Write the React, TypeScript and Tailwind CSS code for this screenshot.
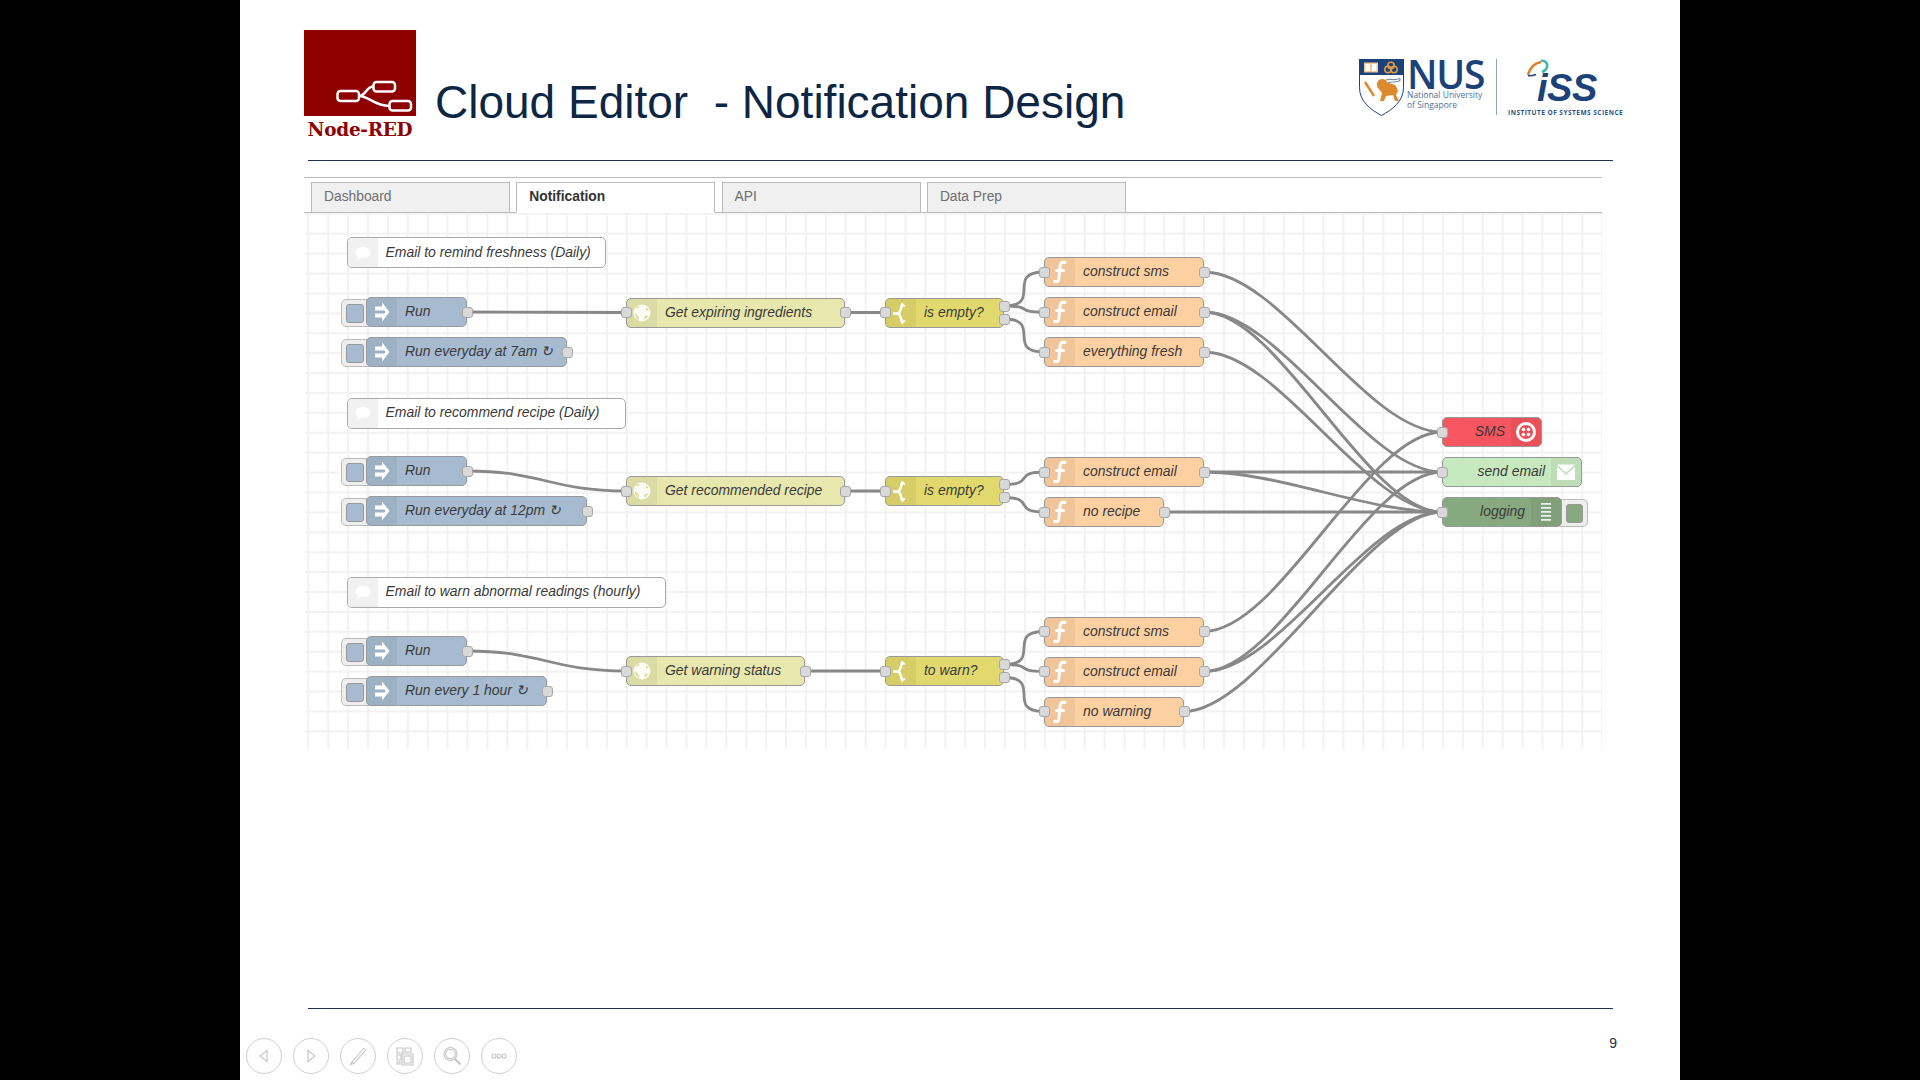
import React from 'react';

// canvas origin in page pixels, node data below is given in page pixels
const OX = 305;
const OY = 213;

type IconName = 'inject' | 'globe' | 'switch' | 'fn' | 'twilio' | 'email' | 'debug' | 'comment';

interface NodeData {
  x: number;
  y: number;
  w: number;
  label: string;
  color: string;
  icon: IconName;
  right?: boolean;
  input?: boolean;
  outputs?: number;
  button?: 'left' | 'right';
}

function NodeIcon({ icon }: { icon: IconName }) {
  switch (icon) {
    case 'inject':
      return (
        <svg viewBox="0 0 30 30" className="h-[30px] w-[30px]" fill="#fff">
          <path d="M8 9.500h7V5.500l7.500 9.500-7.500 9.500v-4H8v-4h9.500l1-1.500-1-1.500H8z" />
        </svg>
      );
    case 'globe':
      return (
        <svg viewBox="0 0 30 30" className="h-[30px] w-[30px]">
          <circle cx="15" cy="15" r="8.500" fill="#fff" fillOpacity="0.9" />
          <path d="M9 10c2 1 3 0 4-2l-3 .5zM7.500 15c2 .5 3 2 4 3.500l.5 4c-2-1-4-4-4.500-7.500zM17 19l3-2 1 1-3 4zM19 9l3 3-3 .5z" fill="#e0dfa2" />
        </svg>
      );
    case 'switch':
      return (
        <svg viewBox="0 0 30 30" className="h-[30px] w-[30px]" fill="none" stroke="#fff" strokeWidth="2.400">
          <path d="M7 15.500h4c3 0 3-2 4-5 .5-1.500 1-2.500 1-3.500M11 15.500c3 0 3 2 4 5 .5 1.500 1 2 1 3" />
          <path d="M16 4.500 20 8.500h-6zM16 26.500l4-4h-6z" fill="#fff" stroke="none" />
        </svg>
      );
    case 'fn':
      return (
        <svg viewBox="0 0 30 30" className="h-[30px] w-[30px]" fill="none" stroke="#fff" strokeWidth="3" strokeLinecap="round">
          <path d="M20 5.500c-3-1-4.500.5-4.800 3.500l-1.400 13c-.3 2.500-1.500 3-4 2.500M11.500 13.500h7" />
        </svg>
      );
    case 'twilio':
      return (
        <svg viewBox="0 0 30 30" className="h-[30px] w-[30px]" fill="none">
          <circle cx="15" cy="15" r="8.500" stroke="#fff" strokeWidth="3" />
          <g fill="#fff">
            <circle cx="12.500" cy="12.500" r="1.800" />
            <circle cx="17.500" cy="12.500" r="1.800" />
            <circle cx="12.500" cy="17.500" r="1.800" />
            <circle cx="17.500" cy="17.500" r="1.800" />
          </g>
        </svg>
      );
    case 'email':
      return (
        <svg viewBox="0 0 30 30" className="h-[30px] w-[30px]" fill="#fff">
          <path d="M6 7.500h18L15 16zM6 9.500l9 8.500 9-8.500V23H6z" />
        </svg>
      );
    case 'debug':
      return (
        <svg viewBox="0 0 30 30" className="h-[30px] w-[30px]" fill="#fff" fillOpacity="0.85">
          <path d="M10 6h10v1.800H10zM10 10h10v1.800H10zM10 14h10v1.800H10zM10 18h10v1.800H10zM10 22h10v1.800H10z" />
        </svg>
      );
    default:
      return (
        <svg viewBox="0 0 30 30" className="h-[30px] w-[30px]" fill="#fff">
          <path d="M15 9c4.400 0 7.500 2.500 7.500 5.500S19.400 20 15 20c-.8 0-1.500-.1-2.200-.2-1 1-2.500 2.200-4.300 2.700.8-1 1.400-2.200 1.500-3.600-1.600-1-2.500-2.600-2.500-4.400C7.500 11.500 10.600 9 15 9z" />
        </svg>
      );
  }
}

const NODES: NodeData[] = [
  { x: 366, y: 297, w: 101, label: 'Run', color: '#a6bbcf', icon: 'inject', outputs: 1, button: 'left' },
  { x: 366, y: 337, w: 201, label: 'Run everyday at 7am ↻', color: '#a6bbcf', icon: 'inject', outputs: 1, button: 'left' },
  { x: 626, y: 297.5, w: 219, label: 'Get expiring ingredients', color: '#e7e7ae', icon: 'globe', input: true, outputs: 1 },
  { x: 885, y: 297.5, w: 119, label: 'is empty?', color: '#e2d96e', icon: 'switch', input: true, outputs: 2 },
  { x: 1044, y: 257, w: 160, label: 'construct sms', color: '#fdd0a2', icon: 'fn', input: true, outputs: 1 },
  { x: 1044, y: 297, w: 160, label: 'construct email', color: '#fdd0a2', icon: 'fn', input: true, outputs: 1 },
  { x: 1044, y: 337, w: 160, label: 'everything fresh', color: '#fdd0a2', icon: 'fn', input: true, outputs: 1 },

  { x: 366, y: 456, w: 101, label: 'Run', color: '#a6bbcf', icon: 'inject', outputs: 1, button: 'left' },
  { x: 366, y: 496, w: 221, label: 'Run everyday at 12pm ↻', color: '#a6bbcf', icon: 'inject', outputs: 1, button: 'left' },
  { x: 626, y: 476, w: 219, label: 'Get recommended recipe', color: '#e7e7ae', icon: 'globe', input: true, outputs: 1 },
  { x: 885, y: 476, w: 119, label: 'is empty?', color: '#e2d96e', icon: 'switch', input: true, outputs: 2 },
  { x: 1044, y: 457, w: 160, label: 'construct email', color: '#fdd0a2', icon: 'fn', input: true, outputs: 1 },
  { x: 1044, y: 497, w: 120, label: 'no recipe', color: '#fdd0a2', icon: 'fn', input: true, outputs: 1 },

  { x: 366, y: 636, w: 101, label: 'Run', color: '#a6bbcf', icon: 'inject', outputs: 1, button: 'left' },
  { x: 366, y: 676, w: 181, label: 'Run every 1 hour ↻', color: '#a6bbcf', icon: 'inject', outputs: 1, button: 'left' },
  { x: 626, y: 656, w: 179, label: 'Get warning status', color: '#e7e7ae', icon: 'globe', input: true, outputs: 1 },
  { x: 885, y: 656, w: 119, label: 'to warn?', color: '#e2d96e', icon: 'switch', input: true, outputs: 2 },
  { x: 1044, y: 616.5, w: 160, label: 'construct sms', color: '#fdd0a2', icon: 'fn', input: true, outputs: 1 },
  { x: 1044, y: 656.5, w: 160, label: 'construct email', color: '#fdd0a2', icon: 'fn', input: true, outputs: 1 },
  { x: 1044, y: 696.5, w: 140, label: 'no warning', color: '#fdd0a2', icon: 'fn', input: true, outputs: 1 },

  { x: 1442, y: 417, w: 100, label: 'SMS', color: '#f7555f', icon: 'twilio', right: true, input: true },
  { x: 1442, y: 457, w: 140, label: 'send email', color: '#c7e9c0', icon: 'email', right: true, input: true },
  { x: 1442, y: 497, w: 120, label: 'logging', color: '#87a980', icon: 'debug', right: true, input: true, button: 'right' },
];

const COMMENTS = [
  { x: 347, y: 237, w: 259, label: 'Email to remind freshness (Daily)' },
  { x: 347, y: 397.5, w: 279, label: 'Email to recommend recipe (Daily)' },
  { x: 347, y: 576.5, w: 319, label: 'Email to warn abnormal readings (hourly)' },
];

// x1, y1, x2, y2
const WIRES: number[][] = [
  [467, 312, 626, 312.5],
  [845, 312.5, 885, 312.5],
  [1004, 306, 1044, 272],
  [1004, 306, 1044, 312],
  [1004, 319, 1044, 352],
  [1204, 272, 1442, 432],
  [1204, 312, 1442, 472],
  [1204, 312, 1442, 512],
  [1204, 352, 1442, 512],

  [467, 471, 626, 491],
  [845, 491, 885, 491],
  [1004, 484.5, 1044, 472],
  [1004, 497.5, 1044, 512],
  [1204, 472, 1442, 472],
  [1204, 472, 1442, 512],
  [1164, 512, 1442, 512],

  [467, 651, 626, 671],
  [805, 671, 885, 671],
  [1004, 664.5, 1044, 631.5],
  [1004, 664.5, 1044, 671.5],
  [1004, 677.5, 1044, 711.5],
  [1204, 631.5, 1442, 432],
  [1204, 671.5, 1442, 472],
  [1204, 671.5, 1442, 512],
  [1184, 711.5, 1442, 512],
];

function wirePath([x1, y1, x2, y2]: number[]) {
  const delta = Math.hypot(x2 - x1, y2 - y1);
  const scale = delta < 100 ? 0.75 - 0.75 * ((100 - delta) / 100) : 0.75;
  const c = 100 * scale;
  return `M${x1 - OX} ${y1 - OY}C${x1 - OX + c} ${y1 - OY} ${x2 - OX - c} ${y2 - OY} ${x2 - OX} ${y2 - OY}`;
}

function Port({ left, top }: { left: number; top: number }) {
  return (
    <div
      className="absolute h-[11px] w-[11px] rounded-[3px] border border-[#a8a8a8] bg-[#d9d9d9]"
      style={{ left: left - 5.5, top: top - 5.5 }}
    />
  );
}

function FlowNode({ node }: { node: NodeData }) {
  const { x, y, w, label, color, icon, right, input, outputs = 0, button } = node;
  const left = x - OX;
  const top = y - OY;
  const portYs = outputs === 2 ? [8.5, 21.5] : [15];
  return (
    <>
      {button === 'left' && (
        <div
          className="absolute flex h-[28px] w-[32px] items-center rounded-[5px] border border-[#bbb] bg-[#eee] pl-[4px]"
          style={{ left: left - 25, top: top + 2 }}
        >
          <div className="h-[19px] w-[18px] rounded-[3px] border border-[#999]" style={{ background: color }} />
        </div>
      )}
      {button === 'right' && (
        <div
          className="absolute flex h-[28px] w-[32px] items-center justify-end rounded-[5px] border border-[#bbb] bg-[#eee] pr-[4px]"
          style={{ left: left + w - 6, top: top + 2 }}
        >
          <div className="h-[19px] w-[17px] rounded-[3px] border border-[#999]" style={{ background: color }} />
        </div>
      )}
      <div
        className={`absolute flex h-[30px] items-center overflow-hidden rounded-[5px] border border-[#999] ${right ? 'flex-row-reverse' : ''}`}
        style={{ left, top, width: w, background: color }}
      >
        <div className="flex h-full w-[30px] shrink-0 items-center justify-center bg-black/5">
          <NodeIcon icon={icon} />
        </div>
        <span
          className={`flex-1 whitespace-nowrap pb-[1px] text-[13.95px] italic text-[#3a3a3a] ${right ? 'pr-[6px] text-right' : 'pl-[8px]'}`}
        >
          {label}
        </span>
      </div>
      {input && <Port left={left} top={top + 15} />}
      {portYs.slice(0, outputs).map((py) => (
        <Port key={py} left={left + w} top={top + py} />
      ))}
    </>
  );
}

function Comment({ x, y, w, label }: { x: number; y: number; w: number; label: string }) {
  return (
    <div
      className="absolute flex h-[31px] items-center overflow-hidden rounded-[5px] border border-[#aaa] bg-white"
      style={{ left: x - OX, top: y - OY, width: w }}
    >
      <div className="flex h-full w-[30px] shrink-0 items-center justify-center bg-[#f1f1f1]">
        <NodeIcon icon="comment" />
      </div>
      <span className="whitespace-nowrap pb-[1px] pl-[7.5px] text-[13.95px] italic text-[#3a3a3a]">{label}</span>
    </div>
  );
}

function NodeRedLogo() {
  return (
    <div className="flex w-[112px] flex-col items-center">
      <svg viewBox="0 0 112 86" className="h-[86px] w-[112px]">
        <rect width="112" height="86" fill="#8f0000" />
        <g fill="none" stroke="#fff" strokeWidth="2.500">
          <rect x="33.500" y="61" width="21.500" height="10" rx="3" />
          <rect x="69.500" y="52" width="21.500" height="9.500" rx="3" />
          <rect x="85.500" y="71" width="21.500" height="9.500" rx="3" />
          <path d="M55 66c7 0 7-9.500 14.500-9.500M55 66c10 0 15 10 30.500 10" />
        </g>
      </svg>
      <span className="mt-[1px] whitespace-nowrap font-['DejaVu_Serif',serif] text-[18.5px] font-bold leading-[26px] tracking-[-0.3px] text-[#8f0000]">
        Node-RED
      </span>
    </div>
  );
}

function NusShield() {
  return (
    <svg viewBox="0 0 45 57" className="h-[57px] w-[45px] shrink-0">
      <path d="M.500.500h44v28c0 14-11 22-22 28C11.500 50.500.500 42.500.500 28.500z" fill="#fff" stroke="#1b4379" />
      <path d="M0 0h45v16H0z" fill="#1b4379" />
      <path d="M5 3.500h14v10H5z" fill="#f0c89a" />
      <path d="M6.500 5h4.500v7H6.500zM13 5h4.500v7H13z" fill="#fff" />
      <g fill="none" stroke="#e59a3f" strokeWidth="1.500">
        <circle cx="32" cy="6.500" r="3.200" />
        <circle cx="29" cy="10.500" r="3.200" />
        <circle cx="35" cy="10.500" r="3.200" />
      </g>
      <path d="M20 21c3-2 7-1 8 2 3 2 8 2 9 4l2 5-2 4 3 6h-4l-2-6-7 1-2 5h-4l2-8-4-5c-2-3-1-6 1-8z" fill="#dc8a2c" />
      <path d="M6 23l9 14" stroke="#dc8a2c" strokeWidth="2.500" />
      <path d="M27 21c4-2 8 1 12-1 2-1 3 1 1 2-4 2-8 0-11 2" fill="none" stroke="#7c8fa8" strokeWidth="1.200" />
    </svg>
  );
}

function IssSwoosh() {
  return (
    <svg viewBox="0 0 22 18" className="absolute left-[20px] top-0 h-[18px] w-[22px]" fill="none" strokeWidth="2.600">
      <path d="M1 16C3 9 8 4 14 3" stroke="#d9832e" />
      <path d="M1 16.500c2 1 5 0 8-1" stroke="#1b4379" strokeWidth="1.500" />
      <path d="M14 2c4-1 7 2 6 6-.5 2-2 4-5 5" stroke="#43b4b4" />
    </svg>
  );
}

function PartnerLogos() {
  return (
    <div className="mt-[29px] flex h-[57px] items-start text-[#1b4379]">
      <NusShield />
      <div className="ml-[3px] flex w-[89px] flex-col font-['Open_Sans',sans-serif]">
        <span className="text-[39px] font-semibold leading-[30px] tracking-[-1.2px]">NUS</span>
        <span className="mt-[1px] whitespace-nowrap text-[8.500px] leading-[10px] text-[#4f6f9c]">National University</span>
        <span className="text-[8.500px] leading-[9px] text-[#4f6f9c]">of Singapore</span>
      </div>
      <div className="h-[56px] w-px bg-[#8ea3bf]" />
      <div className="relative ml-[10px] h-[57px] w-[117px]">
        <IssSwoosh />
        <span className="absolute left-[30px] top-[10px] text-[38px] font-bold italic leading-[38px] tracking-[-0.5px]">iSS</span>
        <span className="absolute left-[1px] top-[50px] whitespace-nowrap font-['Open_Sans',sans-serif] text-[6.500px] font-bold leading-[8px] tracking-[0.48px] text-[#2b5289]">
          INSTITUTE OF SYSTEMS SCIENCE
        </span>
      </div>
    </div>
  );
}

function Tab({ label, active }: { label: string; active?: boolean }) {
  return (
    <div
      className={`-mb-px flex h-[31px] w-[199px] items-center border border-[#bbb] pb-[1px] pl-[12px] text-[13.8px] ${
        active ? 'border-b-white bg-white font-bold text-[#333]' : 'bg-[#f0f0f0] text-[#6e6e6e]'
      }`}
    >
      {label}
    </div>
  );
}

function ToolButton({ children }: { children: React.ReactNode }) {
  return (
    <div className="flex h-[36px] w-[36px] items-center justify-center rounded-full border border-[#cfcfcf]">
      <svg viewBox="0 0 24 24" className="h-[24px] w-[24px]" fill="none" stroke="#c4c4c4" strokeWidth="1.100">
        {children}
      </svg>
    </div>
  );
}

export default function App() {
  return (
    <div className="flex h-[1080px] w-[1920px] justify-center overflow-hidden bg-black font-['Liberation_Sans',Arial,sans-serif]">
      <div className="flex h-full w-[1440px] flex-col bg-white">
        <header className="flex h-[160px] shrink-0 items-start pl-[64px] pr-[56px] pt-[30px]">
          <NodeRedLogo />
          <h1 className="ml-[19px] mt-[49px] whitespace-pre text-[46px] font-normal leading-[46px] text-[#0d2644]">
            Cloud Editor  - Notification Design
          </h1>
          <div className="ml-auto">
            <PartnerLogos />
          </div>
        </header>
        <div className="ml-[68px] h-px w-[1305px] bg-[#1c3350]" />

        <div className="ml-[64px] mt-[16px] w-[1298px] border-t border-[#bbb]">
          <div className="flex h-[35px] items-start gap-[6.3px] border-b border-[#bbb] pl-[7px] pt-[4px]">
            <Tab label="Dashboard" />
            <Tab label="Notification" active />
            <Tab label="API" />
            <Tab label="Data Prep" />
          </div>
          <div className="relative ml-px h-[536px] overflow-hidden bg-white bg-[linear-gradient(to_right,#f2f2f2_1.5px,transparent_1.5px),linear-gradient(to_bottom,#f2f2f2_1.5px,transparent_1.5px)] bg-size-[19.92px_19.92px] bg-position-[2.3px_-0.2px]">
            <svg className="absolute left-0 top-0 h-full w-full" fill="none" stroke="#888" strokeWidth="2.800">
              {WIRES.map((wire, i) => (
                <path key={i} d={wirePath(wire)} />
              ))}
            </svg>
            {COMMENTS.map((c) => (
              <Comment key={c.label} {...c} />
            ))}
            {NODES.map((n) => (
              <FlowNode key={`${n.label}-${n.y}`} node={n} />
            ))}
          </div>
        </div>

        <div className="flex-1" />
        <div className="ml-[68px] h-px w-[1305px] shrink-0 bg-[#1c3350]" />
        <footer className="flex h-[71px] shrink-0 items-start justify-between pl-[6px] pr-[63px]">
          <div className="mt-[29px] flex gap-[11px]">
            <ToolButton><path d="M15 6.500 8 12l7 5.500z" /></ToolButton>
            <ToolButton><path d="M9 6.500 16 12l-7 5.500z" /></ToolButton>
            <ToolButton>
              <path d="M6 18 17 5c1-1 3 .5 2 2L8 19.500z" />
              <path d="M6 18l-1.500 2.500L8 19.500" />
            </ToolButton>
            <ToolButton>
              <path d="M4 4h6v5H4zM12 4h6v4h-6zM4 11h4v5H4zM4 18h3v2H4z" />
              <path d="M9 10h11v11H9z" />
              <path d="M11 12h7v7h-7z" />
            </ToolButton>
            <ToolButton>
              <circle cx="10.500" cy="10" r="6.500" />
              <circle cx="10.500" cy="10" r="4.800" />
              <path d="M15 15l5.500 5.500" strokeWidth="2" />
            </ToolButton>
            <ToolButton>
              <circle cx="7" cy="12" r="2" />
              <circle cx="12" cy="12" r="2" />
              <circle cx="17" cy="12" r="2" />
            </ToolButton>
          </div>
          <span className="mt-[26px] text-[14px] leading-[16px] text-[#1f2d3d]">9</span>
        </footer>
      </div>
    </div>
  );
}
